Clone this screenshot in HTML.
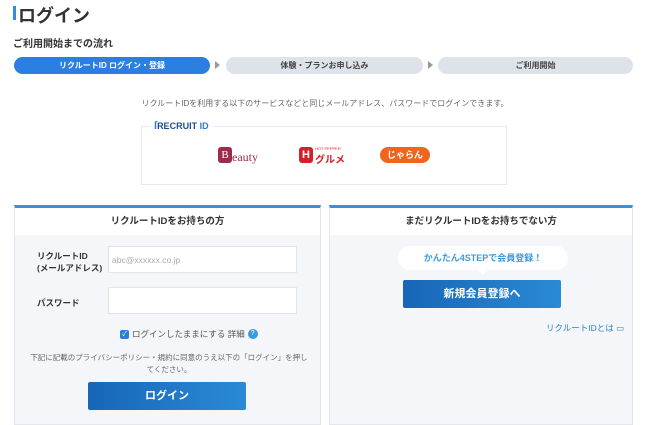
<!DOCTYPE html>
<html><head><meta charset="utf-8"><style>
*{margin:0;padding:0;box-sizing:border-box}
body{width:650px;height:412px;overflow:hidden;background:#fff;font-family:"Liberation Sans","Noto Sans CJK JP",sans-serif;color:#333;position:relative}
.a{position:absolute}
.pill{position:absolute;top:57px;height:17px;border-radius:9px;font-size:8px;font-weight:bold;text-align:center;line-height:17px}
.arr{position:absolute;top:61px;width:0;height:0;border-left:5px solid #999;border-top:4px solid transparent;border-bottom:4px solid transparent}
.panel{position:absolute;top:205px;height:220px;background:#f4f6fa;border:1px solid #e3e7ec;border-top:3px solid #3b8fdc}
.ph{height:27px;background:#fff;text-align:center;font-size:9.5px;font-weight:bold;line-height:27px}
.inp{position:absolute;background:#fff;border:1px solid #e2e5ea;height:27px;width:189px;left:93px;font-size:8.5px;color:#aaa;line-height:27px;padding-left:3px}
.btn{position:absolute;background:linear-gradient(90deg,#1766b8,#2a8ad6);color:#fff;font-weight:bold;font-size:11px;text-align:center;line-height:28px;border-radius:2px}
</style></head><body>
<div class="a" style="left:13px;top:6px;width:3px;height:14px;background:#2f8ce0"></div>
<div class="a" style="left:18px;top:2px;font-size:18px;font-weight:bold;color:#333">ログイン</div>
<div class="a" style="left:13px;top:35px;font-size:10px;font-weight:bold">ご利用開始までの流れ</div>
<div class="pill" style="left:14px;width:196px;background:#2b7fe0;color:#fff">リクルートID ログイン・登録</div>
<div class="arr" style="left:215px"></div>
<div class="pill" style="left:226px;width:197px;background:#dde3e8;color:#444">体験・プランお申し込み</div>
<div class="arr" style="left:428px"></div>
<div class="pill" style="left:438px;width:195px;background:#dde3e8;color:#444">ご利用開始</div>
<div class="a" style="left:0;width:650px;top:98px;text-align:center;font-size:8px;color:#666">リクルートIDを利用する以下のサービスなどと同じメールアドレス、パスワードでログインできます。</div>
<div class="a" style="left:141px;top:126px;width:366px;height:59px;border:1px solid #e6e9ee"></div>
<div class="a" style="left:150px;top:120px;background:#fff;padding:0 4px;font-size:9px;font-weight:bold;color:#1d4f8a"><span style="color:#2a80d6;font-size:11px">ſ</span>RECRUIT <span style="color:#2a80d6">ID</span></div>
<div class="a" style="left:218px;top:147px;width:14px;height:16px;background:#9e2a4c;border-radius:3px;color:#fff;font-size:11px;text-align:center;line-height:16px;font-family:'Liberation Serif',serif">B</div>
<div class="a" style="left:232px;top:150px;font-family:'Liberation Serif',serif;font-size:12px;color:#9e2a4c">eauty</div>
<div class="a" style="left:299px;top:147px;width:14px;height:16px;background:#d4202b;border-radius:3px;color:#fff;font-size:11px;text-align:center;line-height:16px;font-weight:bold">H</div>
<div class="a" style="left:315px;top:146px;font-size:4px;color:#d4202b">HOT PEPPER</div>
<div class="a" style="left:315px;top:151px;font-size:10px;color:#d4202b;font-weight:bold">グルメ</div>
<div class="a" style="left:380px;top:147px;width:50px;height:16px;background:#f0641e;border-radius:8px;color:#fff;font-size:9px;text-align:center;line-height:16px;font-weight:bold">じゃらん</div>

<div class="panel" style="left:14px;width:307px">
<div class="ph">リクルートIDをお持ちの方</div>
<div class="a" style="left:22px;top:42px;font-size:8.5px;font-weight:bold;line-height:12px">リクルートID<br>(メールアドレス)</div>
<div class="inp" style="top:38px">abc@xxxxxx.co.jp</div>
<div class="a" style="left:22px;top:89px;font-size:8.5px;font-weight:bold">パスワード</div>
<div class="inp" style="top:79px"></div>
<div class="a" style="left:105px;top:120px;font-size:8.5px;color:#555;display:flex;align-items:center;gap:3px"><span style="width:9px;height:9px;background:#2b7fe0;border-radius:2px;color:#fff;font-size:7px;line-height:9px;text-align:center">✓</span>ログインしたままにする 詳細 <span style="width:10px;height:10px;border-radius:50%;background:#3a9ae0;color:#fff;font-size:7px;text-align:center;line-height:10px">?</span></div>
<div class="a" style="left:14px;width:280px;top:144px;text-align:center;font-size:7.5px;color:#666;line-height:12px">下記に記載のプライバシーポリシー・規約に同意のうえ以下の「ログイン」を押してください。</div>
<div class="btn" style="left:73px;top:174px;width:158px">ログイン</div>
</div>

<div class="panel" style="left:329px;width:304px">
<div class="ph">まだリクルートIDをお持ちでない方</div>
<div class="a" style="left:68px;top:38px;width:170px;height:24px;background:#fff;border-radius:12px;text-align:center;line-height:24px;font-size:9px;font-weight:bold;color:#3a9ae0">かんたん4STEPで会員登録！</div>
<div class="a" style="left:148px;top:62px;border-left:5px solid transparent;border-right:5px solid transparent;border-top:5px solid #fff"></div>
<div class="btn" style="left:73px;top:72px;width:158px">新規会員登録へ</div>
<div class="a" style="left:216px;top:114px;font-size:8.5px;color:#2f7fc8">リクルートIDとは ▭</div>
</div>
</body></html>
